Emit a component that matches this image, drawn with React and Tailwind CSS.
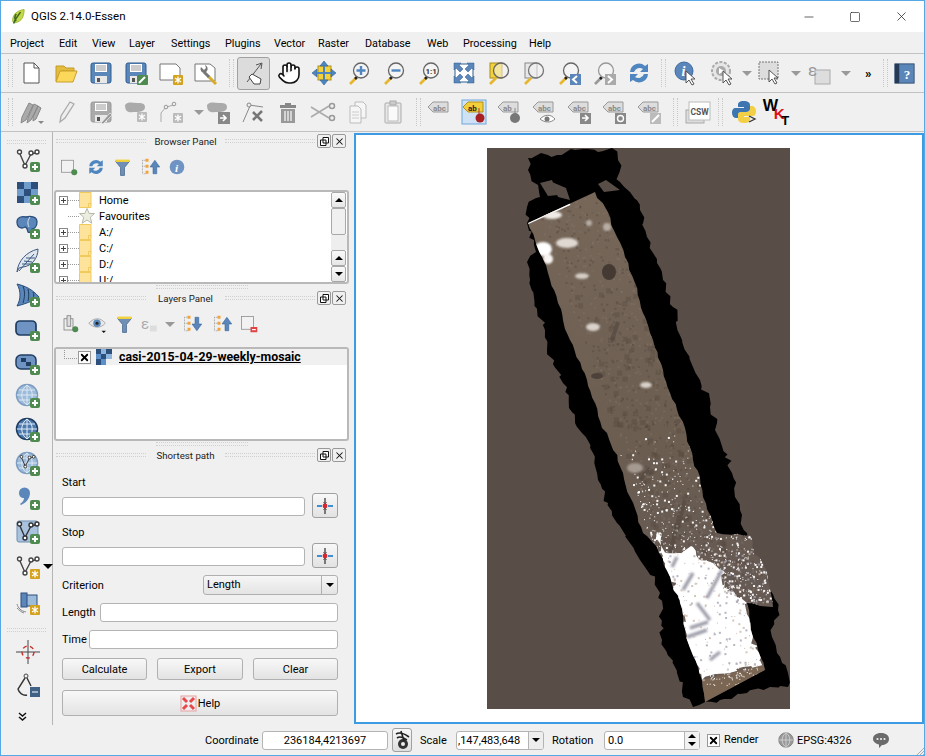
import { Hand, Minus, Square, X } from "lucide-react";

const FONT = "Roboto, 'Liberation Sans', sans-serif";

// ---- small drawing parts ----
const Svg = ({ size = 24, children, className = "" }) => (
  <svg width={size} height={size} viewBox="0 0 24 24" className={`shrink-0 overflow-visible ${className}`}>
    {children}
  </svg>
);

const Plus = ({ x = 14, y = 14 }) => (
  <g>
    <rect x={x} y={y} width="10" height="10" rx="2" fill="#4f8a50" />
    <path d={`M${x + 5} ${y + 2}v6M${x + 2} ${y + 5}h6`} stroke="#fff" strokeWidth="2" />
  </g>
);

const Gear = ({ x = 14, y = 14, c = "#d5a21e" }) => (
  <g>
    <rect x={x} y={y} width="10" height="10" rx="1" fill={c} />
    <path d={`M${x + 5} ${y + 1.5}v7M${x + 2} ${y + 3}l6 4M${x + 8} ${y + 3}l-6 4`} stroke="#fff" strokeWidth="1.3" />
  </g>
);

const Mag = ({ children, dim }) => (
  <Svg>
    <path d="M3 23l6-6" stroke={dim ? "#999" : "#e6b62c"} strokeWidth="2.6" />
    <path d="M8 18l2-2" stroke="#222" strokeWidth="2.6" />
    <circle cx="14" cy="9.5" r="7.5" fill="#f4f4f4" stroke={dim ? "#999" : "#666"} strokeWidth="1.3" />
    {children}
  </Svg>
);

const Floppy = ({ c = "#5a86ba", d = "#2f5c93" }) => (
  <g>
    <rect x="2" y="2" width="20" height="20" rx="2" fill={c} stroke={d} />
    <rect x="6" y="3" width="12" height="8" fill="#fff" />
    <path d="M7 5h10M7 7h10M7 9h10" stroke="#999" />
    <rect x="6" y="15" width="12" height="7" fill="#e8e8e8" />
    <rect x="8" y="17" width="3" height="4" fill="#555" />
  </g>
);

const Vnodes = ({ s = "#444" }) => (
  <g fill="none" stroke={s} strokeWidth="1.4">
    <path d="M3.5 5L9 17.5L15 6L19 5" />
    <circle cx="3.5" cy="4" r="2" fill="#fff" />
    <circle cx="9" cy="18" r="2" fill="#fff" />
    <circle cx="15" cy="5" r="2" fill="#fff" />
    <circle cx="21" cy="4" r="2" fill="#fff" />
  </g>
);

const Label = ({ text = "abc", fill = "#ddd", stroke = "#999", color = "#888", x = 1 }) => (
  <g>
    <path d={`M${x} 7l5-5h15v10h-15z`} fill={fill} stroke={stroke} />
    <text x={x + 5} y="10.5" fontSize="8" fontWeight="700" fill={color} fontFamily={FONT}>{text}</text>
  </g>
);

const Arrow = ({ color = "#5a86ba", down }) => (
  <path d={down ? "M14 3h5v9h4l-6.500 9l-6.500-9h4z" : "M14 21h5v-9h4l-6.500-9l-6.500 9h4z"} fill={color} stroke="#2f5c93" strokeWidth=".7" />
);

const TreeMini = () => (
  <g fill="none" stroke="#888">
    <path d="M2 3h5M2 3v18h5M2 11h5" strokeDasharray="1 1" />
    <rect x="6" y="1" width="4" height="4" fill="#f3a33a" stroke="none" />
    <rect x="6" y="9" width="4" height="4" fill="#f3a33a" stroke="none" />
    <rect x="6" y="17" width="4" height="4" fill="#f3a33a" stroke="none" />
  </g>
);

const Funnel = () => (
  <Svg size={19}>
    <path d="M3 4h18l-6.500 8v10h-5v-10z" fill="#6f8fb5" stroke="#4b6a91" />
    <rect x="3" y="2" width="18" height="3" fill="#f2d23c" />
  </Svg>
);

const Sync = ({ size = 24 }) => (
  <Svg size={size}>
    <path d="M3 11a9 9 0 0 1 15-6l3-2v8h-8l3-3a6 6 0 0 0-9 3z" fill="#4f86c0" />
    <path d="M21 13a9 9 0 0 1-15 6l-3 2v-8h8l-3 3a6 6 0 0 0 9-3z" fill="#4f86c0" />
  </Svg>
);

const Checker = () => (
  <g>
    {[[1, 1, "#2c4f7c"], [8, 1, "#6f9ccd"], [15, 1, "#2c4f7c"], [1, 8, "#6f9ccd"], [8, 8, "#2c4f7c"], [15, 8, "#6f9ccd"], [1, 15, "#2c4f7c"], [8, 15, "#6f9ccd"]].map(([x, y, c]) => (
      <rect key={`${x}-${y}`} x={x} y={y} width="7" height="7" fill={c} />
    ))}
  </g>
);

const Globe = ({ dark }) => (
  <g>
    <circle cx="11" cy="11" r="10.500" fill={dark ? "#4d79ad" : "#9dbbdb"} stroke={dark ? "#1f3d61" : "#7c9cc0"} strokeWidth="1.500" />
    <path d="M1 11h20M3 6h16M3 16h16M11 1v20M11 1c-7 5-7 15 0 20M11 1c7 5 7 15 0 20" fill="none" stroke={dark ? "#e3edf7" : "#dfe9f3"} />
  </g>
);

const Cursor = ({ x = 12, y = 10 }) => (
  <path d={`M${x} ${y}l0 12l3-3l3 5l2-1l-3-5h4z`} fill="#fff" stroke="#444" strokeWidth=".9" />
);

const MiniDrop = () => <span className="ml-[3px] h-0 w-0 border-x-[5px] border-t-[5px] border-x-transparent border-t-[#999]" />;

// ---- toolbars ----
const row1a = [
  <Svg key="new"><path d="M5 2h10l5 5v15H5z" fill="#fff" stroke="#555" /><path d="M15 2v5h5" fill="none" stroke="#555" /></Svg>,
  <Svg key="open"><path d="M2 5h8l2 2h8v3H7L2 20z" fill="#e4bd3d" stroke="#c49a28" /><path d="M6 10h17l-4 11H2z" fill="#fbd85a" stroke="#c9a02a" /></Svg>,
  <Svg key="save"><Floppy /></Svg>,
  <Svg key="saveas"><Floppy /><rect x="13" y="14" width="11" height="10" rx="1" fill="#4f8a50" /><path d="M15 22l6-6" stroke="#fff" strokeWidth="2" /></Svg>,
  <Svg key="print"><path d="M1 3h16l4 4v12H1z" fill="#fff" stroke="#777" /><Gear x={14} y={14} /></Svg>,
  <Svg key="mgr"><path d="M1 3h15l5 4v13H1z" fill="#fff" stroke="#777" /><path d="M14 15l8 8" stroke="#d8ab2c" strokeWidth="3" /><path d="M10 11l5 5" stroke="#777" strokeWidth="3" /><path d="M7 6a4 4 0 0 0 4 6l2-2a4 4 0 0 0-2-6l1 3l-2 2z" fill="#777" /></Svg>,
];

const row1b = [
  <Svg key="hand"><Hand size={24} strokeWidth={1.6} color="#111" fill="#fff" /></Svg>,
  <Svg key="pansel"><rect x="6" y="5" width="13" height="14" fill="#f2d23c" stroke="#b08f1c" /><path d="M12 0l4 5h-8zM12 24l-4-5h8zM0 12l5-4v8zM24 12l-5 4v-8z" fill="#4f86c0" stroke="#2f5c93" strokeWidth=".6" /><path d="M12 5v14M5 12h14" stroke="#4f86c0" strokeWidth="2" /></Svg>,
  <Mag key="in"><path d="M14 5v9M9.500 9.500h9" stroke="#4f86c0" strokeWidth="2.400" /></Mag>,
  <Mag key="out"><path d="M9.500 9.500h9" stroke="#4f86c0" strokeWidth="2.400" /></Mag>,
  <Mag key="one"><text x="8.500" y="12.500" fontSize="8" fontWeight="700" fill="#333" fontFamily={FONT}>1:1</text></Mag>,
  <Svg key="full"><rect x="3" y="3" width="18" height="18" fill="#fff" stroke="#2f5c93" /><path d="M2 2h7l-2 2l4 4l-3 3l-4-4l-2 2zM22 2v7l-2-2l-4 4l-3-3l4-4l-2-2zM2 22v-7l2 2l4-4l3 3l-4 4l2 2zM22 22h-7l2-2l-4-4l3-3l4 4l2-2z" fill="#5a86ba" stroke="#2f5c93" strokeWidth=".5" /></Svg>,
  <Svg key="zsel"><rect x="3" y="2" width="12" height="15" fill="#f2d23c" stroke="#a98a1e" /><path d="M3 23l6-6" stroke="#e6b62c" strokeWidth="2.600" /><circle cx="14" cy="9.500" r="7.500" fill="#f4f4f488" stroke="#666" strokeWidth="1.300" /></Svg>,
  <Svg key="zlay"><rect x="3" y="2" width="12" height="15" fill="#e8e8e8" stroke="#888" /><path d="M3 23l6-6" stroke="#e6b62c" strokeWidth="2.600" /><circle cx="14" cy="9.500" r="7.500" fill="#f4f4f488" stroke="#777" strokeWidth="1.300" /></Svg>,
  <Mag key="last"><rect x="13" y="13" width="11" height="11" fill="#5a86ba" /><path d="M20 15l-4 3.500l4 3.500" fill="none" stroke="#fff" strokeWidth="2" /></Mag>,
  <Mag key="next" dim><rect x="13" y="13" width="11" height="11" fill="#aaa" /><path d="M16 15l4 3.500l-4 3.500" fill="none" stroke="#fff" strokeWidth="2" /></Mag>,
  <Sync key="sync" />,
];

const row2a = [
  <Svg key="pens"><path d="M3 17L10 3l4 2l-7 15l-5 3zM9 18L15 4l4 2l-7 14l-4 3zM14 17l5-11l3 2l-5 11l-3 2z" fill="#aaa" stroke="#888" /><path d="M19 21h6l-3 3z" fill="#888" /></Svg>,
  <Svg key="pen"><path d="M6 22l1-6L16 2l4 2l-9 14z" fill="#eee" stroke="#aaa" strokeWidth="1.300" /></Svg>,
  <Svg key="saved"><Floppy c="#aaa" d="#999" /><path d="M12 23l9-10l2 2l-9 9z" fill="#999" stroke="#eee" strokeWidth=".7" /></Svg>,
  <Svg key="poly"><path d="M1 5c3-4 8-2 12-2s8 0 8 4s-4 5-9 5s-11 2-11-7z" fill="#aaa" /><Gear x={13} y={12} c="#bbb" /></Svg>,
];

const row2b = [
  <Svg key="node"><path d="M1 22l0-9l5-6l8-2" fill="none" stroke="#aaa" /><circle cx="6" cy="7" r="1.800" fill="#eee" stroke="#999" /><circle cx="14" cy="4" r="1.800" fill="#eee" stroke="#999" /><Gear x={13} y={13} c="#bbb" /></Svg>,
];

const row2c = [
  <Svg key="move"><path d="M1 5c3-4 8-2 12-2s8 0 8 4s-4 5-9 5s-11 2-11-7z" fill="#aaa" /><rect x="12" y="12" width="12" height="12" fill="#888" /><path d="M14 18h5M17 15l3 3l-3 3" stroke="#fff" strokeWidth="1.600" fill="none" /></Svg>,
  <Svg key="tools"><path d="M2 22L9 6M8 5l14 2" stroke="#888" fill="none" /><circle cx="8" cy="5" r="2" fill="#eee" stroke="#888" /><path d="M12 12l9 9M21 11l-9 9" stroke="#777" strokeWidth="2.600" /></Svg>,
  <Svg key="trash"><path d="M9 3h6v2h5v3H4V5h5z" fill="#888" /><path d="M5 9h14v14H5z" fill="#999" /><path d="M9 11v10M12 11v10M15 11v10" stroke="#eee" strokeWidth="1.400" /></Svg>,
  <Svg key="cut"><path d="M0 7l18 11M0 17l18-11" stroke="#aaa" strokeWidth="1.500" /><circle cx="21" cy="6" r="2.500" fill="none" stroke="#999" strokeWidth="1.500" /><circle cx="21" cy="18" r="2.500" fill="none" stroke="#999" strokeWidth="1.500" /></Svg>,
  <Svg key="copy"><path d="M9 2h8l3 3v13H9z" fill="#f6f6f6" stroke="#bbb" /><path d="M4 6h8l3 3v14H4z" fill="#f6f6f6" stroke="#bbb" /><path d="M6 12h7M6 15h7M6 18h7" stroke="#ccc" /></Svg>,
  <Svg key="paste"><rect x="4" y="3" width="16" height="20" rx="1" fill="#e8e8e8" stroke="#aaa" /><rect x="7" y="6" width="10" height="15" fill="#fafafa" stroke="#bbb" /><rect x="9" y="1" width="6" height="4" fill="#ccc" stroke="#aaa" /></Svg>,
];

const row2d = [
  <Svg key="l1"><Label text="abc" /></Svg>,
  <Svg key="l2"><rect x="0" y="0" width="24" height="24" fill="#cfe2f5" stroke="#6fa6da" /><Label text="ab" fill="#f2cf3a" stroke="#b08f1c" color="#222" /><path d="M17 8v8" stroke="#bb3333" /><circle cx="18" cy="18" r="4.500" fill="#a81f24" /></Svg>,
  <Svg key="l3"><Label text="ab" /><path d="M18 8v8" stroke="#888" /><circle cx="18" cy="18" r="5" fill="#777" /></Svg>,
  <Svg key="l4"><Label /><path d="M8 19c5-5 11-5 15 0c-4 4-10 4-15 0z" fill="#fff" stroke="#888" /><circle cx="15" cy="19" r="2.500" fill="#777" /></Svg>,
  <Svg key="l5"><Label /><rect x="13" y="13" width="11" height="11" fill="#888" /><path d="M15 18h5M18 15l3 3l-3 3" stroke="#fff" strokeWidth="1.600" fill="none" /></Svg>,
  <Svg key="l6"><Label /><rect x="13" y="13" width="11" height="11" fill="#888" /><circle cx="18.500" cy="18.500" r="3" fill="none" stroke="#fff" strokeWidth="1.400" /></Svg>,
  <Svg key="l7"><Label /><rect x="13" y="13" width="11" height="11" fill="#bbb" /><path d="M15 22l7-7" stroke="#fff" strokeWidth="2" /></Svg>,
];

const Slot = ({ children, w = "w-[35px]" }) => <div className={`flex shrink-0 items-center justify-center ${w}`}>{children}</div>;
const Grip = ({ className = "" }) => <div className={`h-[28px] w-[5px] shrink-0 border-x border-dotted border-[#c8c8c8] ${className}`} />;
const HGrip = ({ className = "" }) => <div className={`h-[4px] border-y border-dotted border-[#cfcfcf] ${className}`} />;

function TitleBar() {
  return (
    <div className="flex h-[31px] items-center bg-white">
      <svg width="14" height="17" viewBox="0 0 16 18" className="ml-[10px]">
        <path d="M2 15C1 7 7 2 15 1c0 8-3 14-10 15z" fill="#c4d84a" stroke="#97b52f" />
        <path d="M3 17c2-6 5-9 8-13M6 6c-2 3-2 6 0 8" stroke="#3f6b1f" strokeWidth="1.800" fill="none" />
      </svg>
      <span className="ml-[6px] text-[11.500px] text-black">QGIS 2.14.0-Essen</span>
      <div className="ml-auto flex items-center text-[#222]">
        <div className="flex w-[46px] justify-center"><Minus size={14} strokeWidth={1.200} /></div>
        <div className="flex w-[46px] justify-center"><Square size={12} strokeWidth={1.300} /></div>
        <div className="flex w-[46px] justify-center"><X size={15} strokeWidth={1.200} /></div>
      </div>
    </div>
  );
}

const menus = [
  ["Project", 49], ["Edit", 33], ["View", 37], ["Layer", 42], ["Settings", 54], ["Plugins", 49],
  ["Vector", 44], ["Raster", 47], ["Database", 62], ["Web", 36], ["Processing", 66], ["Help", 40],
];

function MenuBar() {
  return (
    <div className="flex h-[22px] items-center border-b border-[#c2c2c2] pl-[9px] pt-[3px] text-[10.800px] text-black">
      {menus.map(([name, w]) => (
        <span key={name} style={{ width: w }}>{name}</span>
      ))}
    </div>
  );
}

function ToolbarOne() {
  return (
    <div className="flex h-[39px] items-center border-b border-[#c2c2c2]">
      <Grip className="ml-[7px]" />
      <div className="-ml-[5px] flex pl-[5px]">
        {row1a.map((icon, i) => <Slot key={i}>{icon}</Slot>)}
      </div>
      <Grip className="ml-[6px]" />
      <div className="ml-[3px] flex h-[33px] w-[33px] shrink-0 items-center justify-center rounded-[3px] border border-[#a0a0a0] bg-[#dcdcdc]">
        <svg width="24" height="24" viewBox="0 0 24 24" className="overflow-visible">
          <path d="M5 21L19 3M14 4l6-2l-1 6" stroke="#555" fill="none" />
          <path d="M10 13l9 5l-1 5l-6 0l-5-7z" fill="#fff" stroke="#444" />
        </svg>
      </div>
      <div className="ml-[1px] flex">
        {row1b.map((icon, i) => <Slot key={i}>{icon}</Slot>)}
      </div>
      <Grip className="ml-[5px]" />
      <Slot w="w-[40px]">
        <Svg><circle cx="10" cy="10" r="9" fill="#5a86ba" stroke="#3d6aa1" /><text x="7.500" y="15" fontSize="14" fontWeight="700" fontStyle="italic" fill="#fff" fontFamily="Liberation Serif, serif">i</text><Cursor /></Svg>
      </Slot>
      <Slot w="w-[33px]">
        <Svg><circle cx="10" cy="10" r="9" fill="#e6e6e6" stroke="#aaa" strokeWidth="2" strokeDasharray="3 1.500" /><circle cx="10" cy="10" r="5" fill="#aaa" /><path d="M8 7l5 3l-5 3z" fill="#fff" /><Cursor /></Svg>
      </Slot>
      <MiniDrop />
      <Slot w="w-[36px]">
        <Svg><rect x="1" y="1" width="19" height="17" fill="#ddd" stroke="#777" strokeDasharray="2 1" /><Cursor x={11} y={9} /></Svg>
      </Slot>
      <MiniDrop />
      <Slot w="w-[37px]">
        <Svg><rect x="7" y="9" width="15" height="14" fill="#ddd" stroke="#aaa" /><text x="0" y="15" fontSize="17" fill="#999" fontFamily={FONT}>ε</text></Svg>
      </Slot>
      <MiniDrop />
      <span className="ml-[14px] w-[12px] text-[13px] font-bold leading-none text-black">»</span>
      <Grip className="ml-[6px]" />
      <Slot w="w-[32px]">
        <Svg size={21}><rect x="1" y="1" width="22" height="22" fill="#5a86ba" stroke="#2e4a6b" /><rect x="1" y="1" width="5" height="22" fill="#253a55" /><text x="11" y="18" fontSize="15" fontWeight="700" fill="#fff" fontFamily="Liberation Serif, serif">?</text></Svg>
      </Slot>
    </div>
  );
}

function ToolbarTwo() {
  return (
    <div className="flex h-[39px] items-center border-b border-[#c2c2c2]">
      <Grip className="ml-[7px]" />
      <div className="flex">
        {row2a.map((icon, i) => <Slot key={i}>{icon}</Slot>)}
      </div>
      <Slot w="w-[38px]">{row2b[0]}</Slot>
      <MiniDrop />
      <div className="-ml-[4px] flex">
        {row2c.map((icon, i) => <Slot key={i}>{icon}</Slot>)}
      </div>
      <Grip className="ml-[6px]" />
      <div className="flex">
        {row2d.map((icon, i) => <Slot key={i}>{icon}</Slot>)}
      </div>
      <Grip className="ml-[7px]" />
      <Slot w="w-[40px]">
        <Svg><rect x="0" y="10" width="18" height="13" fill="#ddd" stroke="#aaa" /><rect x="3" y="2" width="21" height="18" fill="#fff" stroke="#bbb" /><text x="4.500" y="14.500" fontSize="8.500" fontWeight="700" fill="#555" fontFamily={FONT}>CSW</text></Svg>
      </Slot>
      <Grip />
      <Slot w="w-[41px]">
        <Svg><path d="M12 1c-5 0-6 2-6 4v2h6v1H4c-3 0-4 2-4 5s2 5 4 5h2v-3c0-2 2-3 4-3h5c2 0 3-1 3-3V5c0-3-3-4-6-4z" fill="#3d75b0" /><path d="M12 23c5 0 6-2 6-4v-2h-6v-1h8c3 0 4-2 4-5s-2-5-4-5h-2v3c0 2-2 3-4 3H9c-2 0-3 1-3 3v4c0 3 3 4 6 4z" fill="#f3cf45" /><path d="M17 16l6 3l-6 3" stroke="#333" fill="none" strokeWidth="1.300" /></Svg>
      </Slot>
      <Slot w="w-[27px]">
        <Svg size={26}>
          <text x="-2" y="11" fontSize="15" fontWeight="700" fill="#000" fontFamily="'Liberation Sans', sans-serif">W</text>
          <text x="8" y="18" fontSize="14" fontWeight="700" fill="#e0101a" fontFamily="'Liberation Sans', sans-serif">K</text>
          <text x="15" y="24" fontSize="12" fontWeight="700" fill="#000" fontFamily="'Liberation Sans', sans-serif">T</text>
        </Svg>
      </Slot>
    </div>
  );
}

const sideIcons = [
  [32, <Svg key="v"><Vnodes /><Plus /></Svg>],
  [33, <Svg key="r"><Checker /><Plus /></Svg>],
  [35, <Svg key="pg"><path d="M1 7c0-5 5-6 9-5c4-1 11-1 11 5c0 5-3 7-5 7c0 3-3 4-4 3c-1-3-1-5-3-5c-3 2-8 1-8-5z" fill="#5a86ba" stroke="#2c4f7c" strokeWidth="1.300" /><path d="M14 2c-2 3-3 6-1 10" stroke="#dde7f2" fill="none" /><Plus /></Svg>],
  [34, <Svg key="sl"><path d="M1 23C2 12 10 3 22 0c0 9-6 17-15 18l-4 1z" fill="#dfe6ee" stroke="#3d5a80" /><path d="M3 22L18 5M8 12l8 1M10 9l9 0M6 15l8 0" stroke="#3d5a80" fill="none" /><Plus /></Svg>],
  [34, <Svg key="ws"><path d="M1 1c8 2 15 5 22 13c-6 4-14 7-22 9c4-7 4-15 0-22z" fill="#5a86ba" stroke="#2c4f7c" /><path d="M7 3c2 5 2 11 0 17M12 6c1 4 1 8 0 12M17 9c1 2 1 4 0 6" stroke="#1f3d61" fill="none" /><Plus /></Svg>],
  [34, <Svg key="rect"><rect x="0" y="4" width="20" height="14" rx="4" fill="#6f94c4" stroke="#1f3d61" strokeWidth="1.700" /><Plus /></Svg>],
  [33, <Svg key="wcs"><rect x="0" y="4" width="20" height="14" rx="5" fill="#6f94c4" stroke="#1f3d61" strokeWidth="1.500" /><path d="M5 7h5v4H5zM10 11h5v4h-5z" fill="#1f3d61" /><Plus /></Svg>],
  [34, <Svg key="wms"><Globe /><Plus /></Svg>],
  [34, <Svg key="wfs"><Globe dark /><Plus /></Svg>],
  [34, <Svg key="wv"><Globe /><g transform="translate(3 2) scale(.7)"><Vnodes s="#333" /></g><Plus /></Svg>],
  [34, <Svg key="com"><path d="M3 7a5.500 5.500 0 1 1 11 0c0 5-4 10-9 12l-1-1c3-2 4-4 4-6c-3 0-5-2-5-5z" fill="#5a86ba" /><Plus /></Svg>],
  [34, <Svg key="vbox"><rect x="1" y="1" width="21" height="21" rx="2" fill="#a9c3df" stroke="#6d8db0" /><Vnodes s="#333" /><Plus /></Svg>],
  [35, <div key="dd" className="flex items-center"><Svg><Vnodes /><Gear /></Svg><span className="ml-[3px] h-0 w-0 border-x-[5px] border-t-[5px] border-x-transparent border-t-black" /></div>],
  [37, <Svg key="gps"><rect x="6" y="4" width="15" height="11" fill="#9dbbdb" stroke="#2c4f7c" /><rect x="5" y="2" width="6" height="14" fill="#5a86ba" stroke="#2c4f7c" /><path d="M1 13c1 4 4 7 9 8M1 17c2 2 4 4 7 5" stroke="#888" fill="none" /><Gear /></Svg>],
];

function SideBar() {
  return (
    <div className="flex w-[52px] shrink-0 flex-col border-r border-[#b5b5b5]">
      <HGrip className="mx-[6px] mt-[8px]" />
      <div className="flex flex-col pl-[15px]">
        {sideIcons.map(([h, icon], i) => (
          <div key={i} className="flex items-center" style={{ height: h }}>{icon}</div>
        ))}
      </div>
      <HGrip className="mx-[6px] mt-[7px]" />
      <div className="flex h-[40px] items-center pl-[15px]">
        <Svg><path d="M12 0v24M0 12h24" stroke="#444" /><circle cx="12" cy="12" r="6" fill="none" stroke="#c52c2c" strokeWidth="1.400" strokeDasharray="4 3.400" /></Svg>
      </div>
      <div className="flex h-[26px] items-center pl-[15px]">
        <Svg><circle cx="10" cy="3" r="2" fill="none" stroke="#444" /><path d="M9 5L2 16c1 4 5 7 9 6M11 5l4 8" fill="none" stroke="#333" strokeWidth="1.400" /><rect x="14" y="14" width="10" height="10" fill="#3f6285" /><path d="M16 19h6" stroke="#fff" /></Svg>
      </div>
      <div className="mt-[14px] pl-[17px] leading-none">
        <svg width="9" height="9" viewBox="0 0 9 9"><path d="M1 1l3.500 3l3.500-3M1 5l3.500 3l3.500-3" fill="none" stroke="#111" strokeWidth="1.500" /></svg>
      </div>
    </div>
  );
}

function DockTitle({ title }) {
  return (
    <div className="flex h-[18px] items-center pl-[3px] pr-[4px]">
      <HGrip className="w-[90px] shrink-0" />
      <div className="flex-1 pt-[2px] text-center text-[9.700px] leading-none text-[#222]">{title}</div>
      <HGrip className="w-[90px] shrink-0" />
      <div className="ml-[2px] flex gap-[1px]">
        <div className="flex h-[14px] w-[14px] items-center justify-center rounded-[2px] border border-[#999]">
          <svg width="9" height="9" viewBox="0 0 9 9"><path d="M3 .500h5.500V6H3zM.500 3H6v5.500H.500z" fill="#fff" stroke="#111" /></svg>
        </div>
        <div className="flex h-[14px] w-[14px] items-center justify-center rounded-[2px] border border-[#999]">
          <X size={11} strokeWidth={2.200} color="#111" />
        </div>
      </div>
    </div>
  );
}

const browserTools = [
  <Svg key="a" size={18}><rect x="2" y="3" width="16" height="16" fill="#f2f2f2" stroke="#888" /><circle cx="19" cy="19" r="4" fill="#4f8a50" /></Svg>,
  <Sync key="b" size={18} />,
  <Funnel key="c" />,
  <Svg key="d" size={18}><TreeMini /><g transform="translate(2 0)"><Arrow /></g></Svg>,
  <Svg key="e" size={16}><circle cx="12" cy="12" r="11" fill="#6f94c4" /><text x="9" y="19" fontSize="17" fontWeight="700" fontStyle="italic" fill="#fff" fontFamily="Liberation Serif, serif">i</text></Svg>,
];

const treeRows = [
  { name: "Home", box: true },
  { name: "Favourites", star: true },
  { name: "A:/", box: true },
  { name: "C:/", box: true },
  { name: "D:/", box: true },
  { name: "U:/", box: true },
];

function ScrollBtn({ up = true }) {
  return (
    <div className="flex h-[16px] w-[15px] items-center justify-center rounded-[2px] border border-[#a8a8a8] bg-gradient-to-b from-[#fafafa] to-[#e6e6e6]">
      <span className={`h-0 w-0 border-x-[4px] border-x-transparent ${up ? "border-b-[4px] border-b-black" : "border-t-[4px] border-t-black"}`} />
    </div>
  );
}

function BrowserPanel() {
  return (
    <>
      <DockTitle title="Browser Panel" />
      <div className="flex h-[34px] items-center pl-[2px]">
        {browserTools.map((icon, i) => <Slot key={i} w="w-[27px]">{icon}</Slot>)}
      </div>
      <div className="mx-[1px] mt-[6px] flex h-[94px] overflow-hidden rounded-[3px] border-2 border-[#b9b9b9] bg-white">
        <div className="h-[200px] flex-1 text-[11px] text-black">
          {treeRows.map((row) => (
            <div key={row.name} className="flex h-[16px] items-center pl-[3px]">
              <div className="flex w-[9px] shrink-0 justify-center">
                {row.box ? (
                  <div className="flex h-[9px] w-[9px] items-center justify-center border border-[#888]">
                    <svg width="7" height="7" viewBox="0 0 7 7"><path d="M3.500 1v5M1 3.500h5" stroke="#444" /></svg>
                  </div>
                ) : <div className="h-full border-l border-dotted border-[#999]" />}
              </div>
              <div className="w-[11px] shrink-0 border-t border-dotted border-[#999]" />
              <div className="flex w-[20px] shrink-0 items-center">
                {row.star ? (
                  <svg width="16" height="16" viewBox="0 0 16 16"><path d="M8 .500l2.200 5h5.300l-4.200 3.700l1.500 6l-4.800-3.200l-4.800 3.200l1.500-6L.500 5.500h5.300z" fill="#eceee2" stroke="#b6b8a6" /></svg>
                ) : (
                  <svg width="13" height="16" viewBox="0 0 13 16"><path d="M.500.500h11.500v15H.500z" fill="#fde49a" stroke="#f2c95c" /><path d="M9.500 15.500v-4h3" fill="none" stroke="#f2c95c" /></svg>
                )}
              </div>
              <span className="pt-[2px]">{row.name}</span>
            </div>
          ))}
        </div>
        <div className="flex w-[17px] shrink-0 flex-col pl-[1px]">
          <ScrollBtn />
          <div className="h-[27px] w-[15px] rounded-[2px] border border-[#a8a8a8] bg-[#f0f0f0]" />
          <div className="h-[15px] bg-[#eee]" />
          <ScrollBtn />
          <ScrollBtn up={false} />
        </div>
      </div>
      <div className="flex h-[5px] items-center justify-center"><HGrip className="w-[92px]" /></div>
    </>
  );
}

function LayersPanel() {
  return (
    <>
      <DockTitle title="Layers Panel" />
      <div className="flex h-[34px] items-center pl-[3px]">
        <Slot w="w-[28px]"><Svg size={18}><rect x="4" y="5" width="12" height="15" fill="#eee" stroke="#777" /><rect x="8" y="1" width="5" height="14" fill="#ddd" stroke="#777" /><circle cx="19" cy="19" r="4" fill="#4f8a50" /></Svg></Slot>
        <Slot w="w-[26px]"><Svg size={18}><path d="M1 11c7-8 16-8 22 0c-6 7-15 7-22 0z" fill="#e8e8e8" stroke="#999" /><circle cx="12" cy="11" r="5" fill="#5a86ba" /><circle cx="12" cy="11" r="2" fill="#222" /><path d="M18 21h6l-3 3z" fill="#111" /></Svg></Slot>
        <Slot w="w-[28px]"><Funnel /></Slot>
        <Slot w="w-[24px]"><Svg size={18}><text x="0" y="18" fontSize="20" fill="#aaa" fontFamily={FONT}>ε</text><rect x="12" y="14" width="9" height="8" fill="#ddd" /></Svg></Slot>
        <MiniDrop />
        <Slot w="w-[33px]"><Svg size={18}><TreeMini /><g transform="translate(2 0)"><Arrow down /></g></Svg></Slot>
        <Slot w="w-[27px]"><Svg size={18}><TreeMini /><g transform="translate(2 0)"><Arrow /></g></Svg></Slot>
        <Slot w="w-[27px]"><Svg size={18}><rect x="2" y="2" width="16" height="17" fill="#f2f2f2" stroke="#888" /><rect x="14" y="16" width="9" height="7" fill="#e04343" /><path d="M16 19.500h5" stroke="#fff" strokeWidth="1.500" /></Svg></Slot>
      </div>
      <div className="mx-[1px] mt-[6px] h-[94px] rounded-[3px] border-2 border-[#b9b9b9] bg-white">
        <div className="flex h-[16px] items-center bg-[#f0f0f0] pl-[8px]">
          <div className="h-[9px] w-[13px] -translate-y-[3px] border-b border-l border-dotted border-[#999]" />
          <div className="ml-[1px] flex h-[13px] w-[13px] items-center justify-center border border-[#999] bg-white">
            <X size={11} strokeWidth={4} color="#000" />
          </div>
          <svg width="16" height="16" viewBox="0 0 16 16" className="ml-[5px]">
            <rect x="0" y="0" width="5" height="5" fill="#2c4f7c" /><rect x="5" y="0" width="5" height="5" fill="#8fb6df" /><rect x="10" y="0" width="6" height="5" fill="#2c4f7c" />
            <rect x="0" y="5" width="5" height="5" fill="#5a8fc7" /><rect x="5" y="5" width="5" height="5" fill="#2c4f7c" /><rect x="10" y="5" width="6" height="5" fill="#8fb6df" />
            <rect x="0" y="10" width="5" height="6" fill="#2c4f7c" /><rect x="5" y="10" width="5" height="6" fill="#5a8fc7" />
          </svg>
          <span className="ml-[7px] whitespace-nowrap text-[12.300px] font-bold text-black underline">casi-2015-04-29-weekly-mosaic</span>
        </div>
      </div>
      <div className="flex h-[5px] items-center justify-center"><HGrip className="w-[92px]" /></div>
    </>
  );
}

const Field = ({ className = "" }) => <div className={`h-[19px] rounded-[3px] border border-[#b4b4b4] bg-white ${className}`} />;

const PointBtn = () => (
  <div className="flex h-[25px] w-[26px] shrink-0 items-center justify-center rounded-[3px] border border-[#a0a0a0] bg-gradient-to-b from-[#f8f8f8] to-[#e2e2e2]">
    <svg width="16" height="16" viewBox="0 0 16 16">
      <path d="M8 0v6l-1.500-2M8 0v6l1.500-2M8 16v-6l-1.500 2M8 16v-6l1.500 2" stroke="#555" fill="none" />
      <path d="M0 8h5M11 8h5" stroke="#3f8fd0" strokeWidth="2" />
      <circle cx="8" cy="8" r="2.400" fill="#d8262c" />
    </svg>
  </div>
);

const PushBtn = ({ children, className = "" }) => (
  <div className={`flex items-center justify-center rounded-[3px] border border-[#b0b0b0] bg-gradient-to-b from-[#f8f8f8] to-[#e3e3e3] pt-[2px] text-[11px] text-black ${className}`}>
    {children}
  </div>
);

function ShortestPath() {
  return (
    <>
      <DockTitle title="Shortest path" />
      <div className="flex flex-col pl-[9px] pr-[12px] text-[11px] text-black">
        <div className="mt-[10px] h-[16px] pt-[1px] leading-[16px]">Start</div>
        <div className="mt-[3px] flex h-[25px] items-center">
          <Field className="mt-[2px] w-[243px]" />
          <div className="ml-auto"><PointBtn /></div>
        </div>
        <div className="mt-[6px] h-[16px] pt-[1px] leading-[16px]">Stop</div>
        <div className="mt-[3px] flex h-[25px] items-center">
          <Field className="mt-[2px] w-[243px]" />
          <div className="ml-auto"><PointBtn /></div>
        </div>
        <div className="mt-[7px] flex h-[19px] items-center justify-between">
          <span className="pt-[3px]">Criterion</span>
          <div className="flex h-[20px] w-[135px] items-center rounded-[3px] border border-[#b0b0b0] bg-gradient-to-b from-[#f6f6f6] to-[#e4e4e4] pl-[3px]">
            <span className="pt-[2px]">Length</span>
            <div className="ml-auto flex h-full w-[16px] items-center justify-center border-l border-[#b0b0b0]">
              <span className="h-0 w-0 border-x-[4px] border-t-[4px] border-x-transparent border-t-black" />
            </div>
          </div>
        </div>
        <div className="mt-[9px] flex items-center">
          <span className="w-[38px] pt-[2px]">Length</span>
          <Field className="flex-1" />
        </div>
        <div className="mt-[8px] flex items-center">
          <span className="w-[27px] pt-[2px]">Time</span>
          <Field className="flex-1" />
        </div>
        <div className="mt-[9px] flex h-[22px] justify-between">
          <PushBtn className="w-[85px]">Calculate</PushBtn>
          <PushBtn className="w-[86px]">Export</PushBtn>
          <PushBtn className="w-[85px]">Clear</PushBtn>
        </div>
        <PushBtn className="mt-[10px] h-[26px]">
          <svg width="17" height="17" viewBox="0 0 17 17" className="-mt-[2px] mr-[1px]">
            <rect x="1" y="1" width="15" height="15" fill="#eee" stroke="#e8a0a0" />
            <path d="M3 3l4 4M14 3l-4 4M3 14l4-4M14 14l-4-4" stroke="#e8474c" strokeWidth="3" />
          </svg>
          Help
        </PushBtn>
      </div>
    </>
  );
}

// ---- the raster on the map canvas ----
const blackBandRaw = "528,158 541,153 557,155 575,150 598,152 612,148 618,160 620,182 630,192 640,210 647,237 657,263 663,280 673,307 682,340 693,367 700,380 710,407 717,423 715,430 720,440 732,473 735,497 740,510 747,533 760,560 778,610 772,637 777,653 788,673 788,687 770,687 747,693 720,700 693,707 683,697 677,673 662,640 660,593 647,570 640,560 630,543 617,523 608,503 598,480 593,453 582,433 577,427 563,383 547,350 545,330 530,280 527,262 536,252 527,223 527,207 540,197 528,170";
const stripRaw = "595,192 605,207 617,237 625,257 635,283 643,313 653,340 663,370 670,393 685,428 693,460 700,477 703,497 717,533 750,535 755,553 765,567 773,607 747,603 753,637 765,670 705,702 702,680 688,643 680,603 670,577 657,547 643,533 630,497 623,473 607,433 602,428 587,380 570,340 558,303 548,273 542,257 528,223";
const snowRaw = "657,533 667,553 680,553 693,547 700,560 713,563 725,573 723,587 737,597 747,603 753,637 763,667 743,667 702,680 688,643 680,603 670,577";
const brownNotches = ["540,183 552,180 558,195 548,196", "552,182 566,188 570,200 558,197", "598,184 606,180 620,190 604,192"];

function rng(seed) {
  let s = seed;
  return () => {
    s = (s * 16807) % 2147483647;
    return s / 2147483647;
  };
}

// break long edges into short jittered steps so the outline looks like a raster's
function jag(raw, step, amp, seed) {
  const r = rng(seed);
  const pts = raw.split(" ").map((p) => p.split(",").map(Number));
  const out = [];
  pts.forEach(([x, y], i) => {
    const [nx, ny] = pts[(i + 1) % pts.length];
    const len = Math.hypot(nx - x, ny - y);
    out.push(`${x},${y}`);
    if (len > 60) return;
    const n = Math.floor(len / step);
    for (let k = 1; k < n; k++) {
      const t = k / n;
      out.push(`${(x + (nx - x) * t + (r() - 0.5) * amp * 2).toFixed(1)},${(y + (ny - y) * t + (r() - 0.5) * amp * 2).toFixed(1)}`);
    }
  });
  return out.join(" ");
}

const blackBand = jag(blackBandRaw, 5, 3, 91);
const strip = jag(stripRaw, 6, 1.2, 37);
const snow = jag(snowRaw, 4, 3.5, 53);

function makeSpecks() {
  const r = rng(4711);
  const under = [];
  const over = [];
  // ground texture over the whole strip
  for (let i = 0; i < 1500; i++) {
    const y = 192 + r() * 510;
    const x = 528 + (y - 192) * 0.37 + r() * 115;
    under.push({ x, y, s: 2, c: r() > 0.5 ? "#54473d" : "#85756a", o: 0.45 });
  }
  // darker patches
  for (let i = 0; i < 120; i++) {
    const y = 280 + r() * 280;
    const x = 560 + (y - 280) * 0.37 + r() * 80;
    under.push({ x, y, s: 5, c: "#4f4339", o: 0.3 });
  }
  // white flecks, more of them toward the snow line
  for (let i = 0; i < 1100; i++) {
    const y = 430 + Math.sqrt(r()) * 175;
    const x = 610 + (y - 430) * 0.37 + r() * 135;
    under.push({ x, y, s: r() > 0.75 ? 2 : 1, c: "#fff", o: 0.95 });
  }
  // rock showing through the snow
  for (let i = 0; i < 260; i++) {
    const y = 550 + r() * 130;
    const x = 665 + (y - 550) * 0.25 + r() * 90;
    over.push({ x, y, s: r() > 0.5 ? 2 : 1, c: r() > 0.5 ? "#c9b8ab" : "#a6a4b2", o: 0.8 });
  }
  // flecks on the bottom brown wedge
  for (let i = 0; i < 90; i++) {
    const y = 664 + r() * 22;
    const x = 704 + r() * 58;
    over.push({ x, y, s: 1, c: "#fff", o: 1 });
  }
  return { under, over };
}

const specks = makeSpecks();

const Specks = ({ items }) => items.map((d, i) => <rect key={i} x={d.x} y={d.y} width={d.s} height={d.s} fill={d.c} opacity={d.o} />);

function Raster() {
  return (
    <svg width="303" height="561" viewBox="487 148 303 561" className="block">
      <defs>
        <clipPath id="stripClip"><polygon points={strip} /></clipPath>
        <linearGradient id="ground" x1="0" y1="0" x2="0" y2="1">
          <stop offset="0" stopColor="#766759" />
          <stop offset="0.5" stopColor="#6b5d50" />
          <stop offset="0.75" stopColor="#665a54" />
          <stop offset="1" stopColor="#6a5c53" />
        </linearGradient>
        <filter id="soft"><feGaussianBlur stdDeviation="1.300" /></filter>
      </defs>
      <rect x="487" y="148" width="303" height="561" fill="#584d47" />
      <polygon points={blackBand} fill="#000" />
      {brownNotches.map((p) => <polygon key={p} points={p} fill="#584d47" />)}
      <polygon points={strip} fill="url(#ground)" />
      <g clipPath="url(#stripClip)">
        <Specks items={specks.under} />
        <ellipse cx="609" cy="272" rx="7" ry="8" fill="#453a33" />
        <ellipse cx="597" cy="376" rx="6" ry="3" fill="#4d423a" />
        <path d="M612 340l6-18M670 553l10-40M677 530l8-30M640 480l10-12" stroke="#544840" strokeWidth="4" fill="none" opacity=".7" />
        <path d="M528 223L570 204" stroke="#fff" strokeWidth="2" />
        <polygon points={snow} fill="#fff" />
        <g filter="url(#soft)">
          <path d="M672 567l5-10M683 590l10-17M707 598l15-28M687 637l20-7M690 628l18-6M697 603l13 17M710 660l10-8" stroke="#8f8f9f" strokeWidth="3.500" opacity=".85" fill="none" />
        </g>
        <polygon points="702,680 763,665 765,670 705,702" fill="#7b6553" />
        <Specks items={specks.over} />
        <g filter="url(#soft)">
          <ellipse cx="552" cy="215" rx="10" ry="4" fill="#efeae5" />
          <ellipse cx="567" cy="243" rx="11" ry="5" fill="#e0d9d2" />
          <ellipse cx="543" cy="249" rx="9" ry="7" fill="#fff" />
          <ellipse cx="548" cy="259" rx="5" ry="5" fill="#f8f5f2" />
          <ellipse cx="582" cy="276" rx="7" ry="3" fill="#d5cdc5" />
          <ellipse cx="589" cy="223" rx="3" ry="3" fill="#b8aea4" />
          <ellipse cx="607" cy="227" rx="4" ry="4" fill="#b8aea4" />
          <ellipse cx="593" cy="327" rx="7" ry="4" fill="#d9d2ca" />
          <ellipse cx="646" cy="385" rx="6" ry="3" fill="#d9d2ca" />
          <ellipse cx="635" cy="468" rx="8" ry="5" fill="#a59a90" />
        </g>
      </g>
    </svg>
  );
}

function StatusBar() {
  return (
    <div className="flex h-[30px] items-center text-[11px] text-black">
      <span className="ml-[204px] w-[57px] pt-[2px]">Coordinate</span>
      <div className="flex h-[19px] w-[126px] items-center justify-center rounded-[3px] border border-[#b4b4b4] bg-white pt-[2px]">236184,4213697</div>
      <div className="ml-[4px] flex h-[24px] w-[20px] items-center justify-center rounded-[3px] border border-[#a0a0a0] bg-gradient-to-b from-[#f8f8f8] to-[#dedede]">
        <svg width="15" height="20" viewBox="0 0 15 20">
          <ellipse cx="8" cy="14" rx="5" ry="5" fill="#333" />
          <path d="M1 4c5-3 10 1 13 3M2 8c4-3 8 1 10 2M6 1l3 10" stroke="#222" strokeWidth="1.600" fill="none" />
          <circle cx="8" cy="14" r="2" fill="#eee" />
        </svg>
      </div>
      <span className="ml-[8px] w-[36px] pt-[2px]">Scale</span>
      <div className="flex h-[19px] w-[88px] items-center overflow-hidden rounded-[3px] border border-[#b4b4b4] bg-white pl-[1px]">
        <span className="w-[70px] whitespace-nowrap pt-[2px]">,147,483,648</span>
        <div className="ml-auto flex h-full w-[15px] items-center justify-center border-l border-[#b4b4b4] bg-[#eee]">
          <span className="h-0 w-0 border-x-[4px] border-t-[4px] border-x-transparent border-t-black" />
        </div>
      </div>
      <span className="ml-[8px] w-[52px] pt-[2px]">Rotation</span>
      <div className="flex h-[19px] w-[96px] items-center rounded-[3px] border border-[#b4b4b4] bg-white pl-[3px]">
        <span className="pt-[2px]">0.0</span>
        <div className="ml-auto flex h-full w-[15px] flex-col items-center justify-around border-l border-[#b4b4b4] bg-[#f2f2f2]">
          <span className="h-0 w-0 border-x-[4px] border-b-[4px] border-x-transparent border-b-black" />
          <span className="h-0 w-0 border-x-[4px] border-t-[4px] border-x-transparent border-t-black" />
        </div>
      </div>
      <div className="ml-[7px] flex h-[13px] w-[13px] items-center justify-center border border-[#999] bg-white">
        <X size={11} strokeWidth={4} color="#000" />
      </div>
      <span className="ml-[4px] w-[54px]">Render</span>
      <svg width="16" height="16" viewBox="0 0 22 22"><circle cx="11" cy="11" r="10" fill="#999" stroke="#777" /><path d="M1 11h20M11 1v20M11 1c-7 5-7 15 0 20M11 1c7 5 7 15 0 20" fill="none" stroke="#ddd" /></svg>
      <span className="ml-[3px] w-[75px] pt-[2px]">EPSG:4326</span>
      <svg width="18" height="18" viewBox="0 0 18 18"><path d="M9 2c5 0 8 2.500 8 6s-3 6-7 6l-3 3v-3.500c-3-.800-6-2.500-6-5.500c0-3.500 3-6 8-6z" fill="#6b6b6b" /><circle cx="5.500" cy="8" r="1.100" fill="#eee" /><circle cx="9" cy="8" r="1.100" fill="#eee" /><circle cx="12.500" cy="8" r="1.100" fill="#eee" /></svg>
      <svg width="7" height="7" viewBox="0 0 7 7" className="ml-auto mt-[22px]"><path d="M7 0L0 7M7 3L3 7M7 6L6 7" stroke="#aaa" /></svg>
    </div>
  );
}

export default function App() {
  return (
    <div className="flex h-[756px] w-[925px] flex-col overflow-hidden border border-[#55a8e4] bg-[#f0f0f0]" style={{ fontFamily: FONT }}>
      <TitleBar />
      <MenuBar />
      <ToolbarOne />
      <ToolbarTwo />
      <div className="flex h-[593px]">
        <SideBar />
        <div className="w-[297px] shrink-0">
          <BrowserPanel />
          <LayersPanel />
          <ShortestPath />
        </div>
        <div className="my-[1px] ml-[4px] flex-1 border-2 border-[#3d9be3] bg-white pl-[131px] pt-[13px]">
          <Raster />
        </div>
      </div>
      <StatusBar />
    </div>
  );
}
